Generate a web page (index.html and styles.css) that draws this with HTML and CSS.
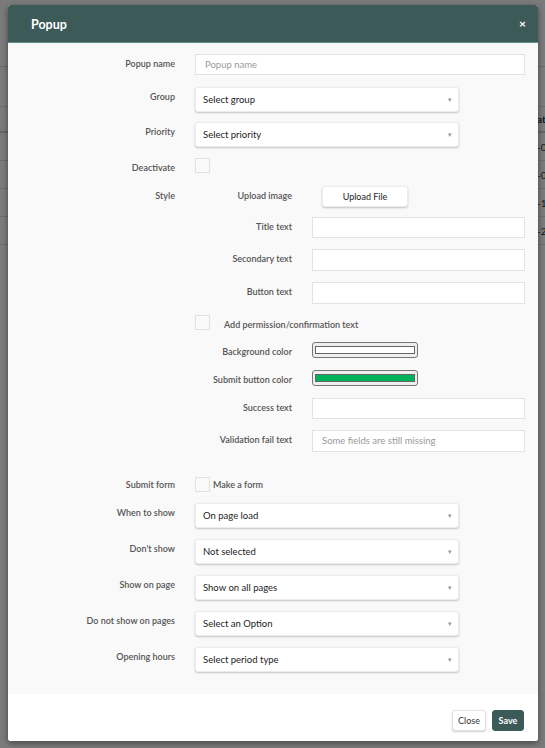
FILE: index.html
```html
<!DOCTYPE html>
<html lang="en">
<head>
<meta charset="utf-8">
<title>Popup</title>
<link rel="stylesheet" href="styles.css">
</head>
<body>
<div class="page">
  <div class="page-top"></div>
  <div class="page-row tall"></div>
  <div class="page-row head"><span class="cell">at</span></div>
  <div class="page-row"><span class="cell">-0</span></div>
  <div class="page-row"><span class="cell">-0</span></div>
  <div class="page-row"><span class="cell">-1'</span></div>
  <div class="page-row"><span class="cell">-2</span></div>
</div>
<div class="overlay">
  <div class="modal">
    <div class="modal-header">
      <h1 class="modal-title">Popup</h1>
      <span class="modal-close">×</span>
    </div>
    <div class="modal-body">
      <div class="row r-name">
        <label class="label">Popup name</label>
        <div class="input placeholder">Popup name</div>
      </div>
      <div class="row r-group">
        <label class="label">Group</label>
        <div class="select"><span>Select group</span><span class="caret">▾</span></div>
      </div>
      <div class="row r-priority">
        <label class="label">Priority</label>
        <div class="select"><span>Select priority</span><span class="caret">▾</span></div>
      </div>
      <div class="row r-deact">
        <label class="label">Deactivate</label>
        <div class="cell-flex"><span class="checkbox"></span></div>
      </div>
      <div class="row r-style">
        <label class="label">Style</label>
        <div class="style-box">
          <div class="sub-row">
            <label class="label">Upload image</label>
            <div class="cell-flex"><button class="btn-upload">Upload File</button></div>
          </div>
          <div class="sub-row s-title">
            <label class="label">Title text</label>
            <div class="input"></div>
          </div>
          <div class="sub-row s-sec">
            <label class="label">Secondary text</label>
            <div class="input tall"></div>
          </div>
          <div class="sub-row s-btn">
            <label class="label">Button text</label>
            <div class="input tall"></div>
          </div>
          <div class="check-row s-perm">
            <span class="checkbox"></span>
            <span class="check-text">Add permission/confirmation text</span>
          </div>
          <div class="sub-row s-bg">
            <label class="label">Background color</label>
            <div class="picker"><span class="swatch white"></span></div>
          </div>
          <div class="sub-row s-submit">
            <label class="label">Submit button color</label>
            <div class="picker"><span class="swatch green"></span></div>
          </div>
          <div class="sub-row s-success">
            <label class="label">Success text</label>
            <div class="input"></div>
          </div>
          <div class="sub-row s-valid">
            <label class="label">Validation fail text</label>
            <div class="input tall placeholder">Some fields are still missing</div>
          </div>
        </div>
      </div>
      <div class="row r-submit">
        <label class="label label-mid">Submit form</label>
        <div class="form-check"><span class="checkbox"></span><span class="check-text">Make a form</span></div>
      </div>
      <div class="row r-when">
        <label class="label">When to show</label>
        <div class="select"><span>On page load</span><span class="caret">▾</span></div>
      </div>
      <div class="row r-sel">
        <label class="label">Don't show</label>
        <div class="select"><span>Not selected</span><span class="caret">▾</span></div>
      </div>
      <div class="row r-sel">
        <label class="label">Show on page</label>
        <div class="select"><span>Show on all pages</span><span class="caret">▾</span></div>
      </div>
      <div class="row r-sel">
        <label class="label">Do not show on pages</label>
        <div class="select"><span>Select an Option</span><span class="caret">▾</span></div>
      </div>
      <div class="row r-sel">
        <label class="label">Opening hours</label>
        <div class="select"><span>Select period type</span><span class="caret">▾</span></div>
      </div>
    </div>
    <div class="modal-footer">
      <button class="btn btn-close">Close</button>
      <button class="btn btn-save">Save</button>
    </div>
  </div>
</div>
</body>
</html>
```

FILE: styles.css
```css
* { box-sizing: border-box; }
html, body { margin: 0; padding: 0; }
body {
  font-family: Lato, "Open Sans", "Liberation Sans", sans-serif;
  background: #ffffff;
  width: 545px;
  height: 748px;
  overflow: hidden;
}

/* underlying page */
.page { background: #fff; height: 748px; }
.page-top { height: 67px; border-bottom: 1px solid #ddd; }
.page-row {
  height: 28px;
  border-bottom: 1px solid #e2e2e2;
  font-size: 10px;
  color: #333;
  display: flex;
  align-items: center;
}
.page-row.tall { height: 40px; }
.page-row.head { height: 26px; border-bottom: 2px solid #d0d0d0; font-weight: 700; }
.page-row .cell { padding-left: 537px; white-space: nowrap; }

.overlay {
  position: fixed;
  inset: 0;
  background: rgba(0, 0, 0, 0.52);
  padding: 5px 7px 0 8px;
}

.modal {
  width: 530px;
  background: #fff;
  border-radius: 3px;
  box-shadow: 0 2px 6px rgba(0, 0, 0, 0.45);
  overflow: hidden;
}
.modal-header {
  height: 38px;
  background: #3c5a58;
  border-bottom: 1px solid #5e8e88;
  display: flex;
  align-items: center;
  justify-content: space-between;
  padding: 1px 12px 0 23px;
}
.modal-title {
  margin: 0;
  color: #fff;
  font-size: 12.5px;
  font-weight: 700;
}
.modal-close {
  color: #fff;
  font-size: 12px;
  font-weight: 700;
  line-height: 1;
}

.modal-body {
  background: #f9f9f9;
  padding: 11px 13px 22px 0;
}
.row {
  display: grid;
  grid-template-columns: 167px 1fr;
  column-gap: 20px;
  align-items: start;
}
.label {
  display: block;
  text-align: right;
  font-size: 9px;
  font-weight: 600;
  color: #555;
  line-height: 11px;
  padding-top: 4px;
  white-space: nowrap;
}
.label-mid { padding-top: 2px; }

.cell-flex { display: flex; }

.r-group { margin-top: 12px; }
.r-priority { margin-top: 10px; }
.r-deact { margin-top: 11px; }
.r-style { margin-top: 13px; }
.r-submit { margin-top: 25px; }
.r-when { margin-top: 11px; }
.r-sel { margin-top: 11px; }

.input {
  height: 21px;
  background: #fff;
  border: 1px solid #e3e3e3;
  font-size: 9.5px;
  line-height: 19px;
  padding: 0 9px;
  color: #222;
}
.input.tall { height: 22px; line-height: 20px; }
.input.placeholder { color: #9a9a9a; }

.select {
  width: 264px;
  height: 25px;
  background: #fff;
  border: 1px solid #ececec;
  border-radius: 3px;
  box-shadow: 0 1px 2px rgba(0, 0, 0, 0.22);
  display: flex;
  align-items: center;
  justify-content: space-between;
  padding: 0 6px 0 7px;
  font-size: 9.5px;
  color: #222;
}
.caret { font-size: 7px; color: #999; }

.checkbox {
  display: block;
  width: 15px;
  height: 15px;
  background: #f9f9f9;
  border: 1px solid #e1e1e1;
}

.style-box { display: flex; flex-direction: column; }
.sub-row {
  display: grid;
  grid-template-columns: 97px 1fr;
  column-gap: 20px;
  align-items: start;
}
.s-title { margin-top: 10px; }
.s-sec { margin-top: 11px; }
.s-btn { margin-top: 11px; }
.s-perm { margin-top: 11px; }
.s-bg { margin-top: 12px; }
.s-submit { margin-top: 12px; }
.s-success { margin-top: 12px; }
.s-valid { margin-top: 11px; }

.btn-upload {
  margin-left: 10px;
  width: 86px;
  height: 21px;
  background: #fff;
  border: 1px solid #ececec;
  border-radius: 3px;
  box-shadow: 0 1px 2px rgba(0, 0, 0, 0.22);
  font-family: inherit;
  font-size: 9px;
  color: #222;
  padding: 0;
}

.check-row { display: flex; align-items: flex-start; }
.check-row .check-text {
  margin-left: 14px;
  padding-top: 4px;
  font-size: 9px;
  font-weight: 600;
  color: #555;
  line-height: 11px;
}
.form-check { display: flex; align-items: center; }
.form-check .check-text {
  margin-left: 3px;
  font-size: 9px;
  font-weight: 600;
  color: #555;
  line-height: 11px;
}

.picker {
  width: 106px;
  height: 16px;
  background: #efefef;
  border: 1px solid #777;
  border-radius: 3px;
  padding: 3px 2px;
}
.swatch {
  display: block;
  height: 100%;
  border: 1px solid #666;
}
.swatch.white { background: #fff; }
.swatch.green { background: #00b25a; }

.modal-footer {
  height: 47px;
  background: #fff;
  display: flex;
  justify-content: flex-end;
  align-items: flex-start;
  gap: 6px;
  padding: 16px 14px 0 0;
}
.btn {
  height: 21px;
  border-radius: 3px;
  font-family: inherit;
  font-size: 9px;
  padding: 0;
}
.btn-close {
  width: 34px;
  background: #fff;
  border: 1px solid #e2e2e2;
  box-shadow: 0 1px 2px rgba(0, 0, 0, 0.2);
  color: #333;
}
.btn-save {
  width: 32px;
  background: #3c5a58;
  border: 1px solid #3c5a58;
  color: #fff;
  font-weight: 700;
}
```
